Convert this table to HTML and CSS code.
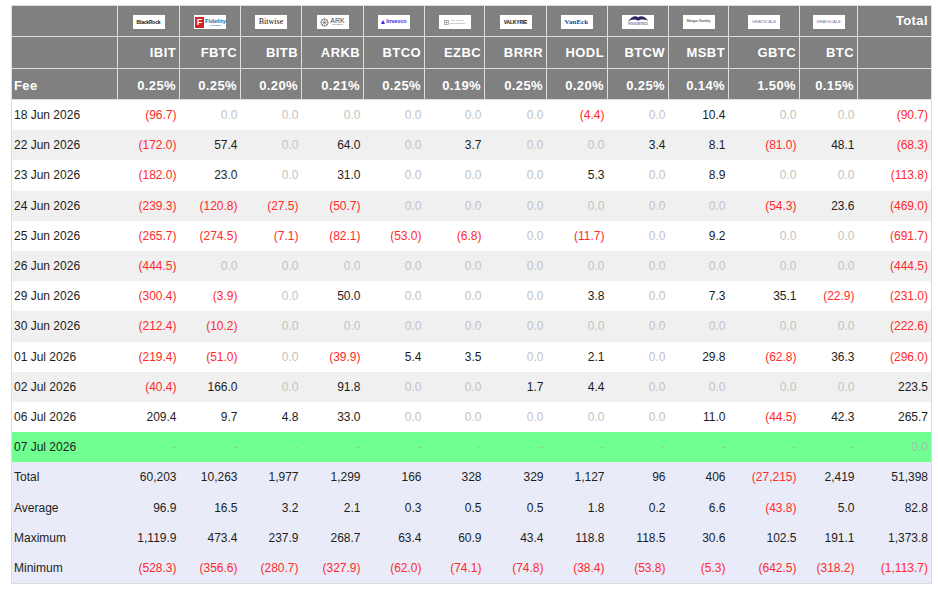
FILE: index.html
```html
<!DOCTYPE html>
<html>
<head>
<meta charset="utf-8">
<link rel="stylesheet" href="styles.css">
</head>
<body>
<table class="flows">
<colgroup>
<col class="c-lbl"><col class="c62"><col class="c61"><col class="c61"><col class="c62"><col class="c61"><col class="c60"><col class="c62"><col class="c61"><col class="c61"><col class="c60"><col class="c71"><col class="c58"><col class="c74">
</colgroup>
<thead>
<tr class="logos">
<th></th>
<th><span class="logo lg-blackrock">BlackRock</span></th>
<th><span class="logo lg-fidelity"><span class="fid-f">F</span><span class="fid-t">Fidelity<span class="fid-s">INVESTMENTS</span></span></span></th>
<th><span class="logo lg-bitwise">Bitwise</span></th>
<th><span class="logo lg-ark"><svg class="ark-ic" viewBox="0 0 10 10"><circle cx="5" cy="5" r="4" fill="none" stroke="#555" stroke-width="0.8"/><path d="M5 1v8M1 5h8M2.2 2.2l5.6 5.6M7.8 2.2l-5.6 5.6" stroke="#555" stroke-width="0.5"/></svg><span class="ark-t">ARK<span class="ark-s">INVEST</span></span></span></th>
<th><span class="logo lg-invesco"><svg class="inv-ic" viewBox="0 0 6 6"><path d="M0 6L3 0L6 6Z" fill="#2f2ee0"/></svg>Invesco</span></th>
<th><span class="logo lg-franklin"><svg class="fr-ic" viewBox="0 0 6 6"><rect x="0.5" y="0.5" width="5" height="5" fill="none" stroke="#888" stroke-width="0.8"/><rect x="2" y="2" width="2" height="2" fill="#888"/></svg><span class="fr-t">FRANKLIN<br>TEMPLETON</span></span></th>
<th><span class="logo lg-valkyrie">VALKYRIE</span></th>
<th><span class="logo lg-vaneck">VanEck<sup>·</sup></span></th>
<th><span class="logo lg-wisdom"><svg class="wt-ic" viewBox="0 0 24 8"><path d="M1 7C5 1 9 0 12 2C15 0 20 1 23 6C19 4 15 4 12 6C9 4 5 4 1 7Z" fill="#2e2466"/></svg><span class="wt-t">WISDOMTREE</span></span></th>
<th><span class="logo lg-morgan">Morgan Stanley</span></th>
<th><span class="logo lg-gray">GRAYSCALE</span></th>
<th><span class="logo lg-gray">GRAYSCALE</span></th>
<th class="big">Total</th>
</tr>
<tr class="tickers">
<th></th>
<th>IBIT</th><th>FBTC</th><th>BITB</th><th>ARKB</th><th>BTCO</th><th>EZBC</th><th>BRRR</th><th>HODL</th><th>BTCW</th><th>MSBT</th><th>GBTC</th><th>BTC</th><th></th>
</tr>
<tr class="fees">
<th class="lbl">Fee</th>
<th>0.25%</th><th>0.25%</th><th>0.20%</th><th>0.21%</th><th>0.25%</th><th>0.19%</th><th>0.25%</th><th>0.20%</th><th>0.25%</th><th>0.14%</th><th>1.50%</th><th>0.15%</th><th></th>
</tr>
</thead>
<tbody>
<tr>
<td class="lbl">18 Jun 2026</td>
<td class="neg">(96.7)</td><td class="z">0.0</td><td class="z">0.0</td><td class="z">0.0</td><td class="z">0.0</td><td class="z">0.0</td><td class="z">0.0</td><td class="neg">(4.4)</td><td class="z">0.0</td><td>10.4</td><td class="z">0.0</td><td class="z">0.0</td><td class="neg">(90.7)</td>
</tr>
<tr>
<td class="lbl">22 Jun 2026</td>
<td class="neg">(172.0)</td><td>57.4</td><td class="z">0.0</td><td>64.0</td><td class="z">0.0</td><td>3.7</td><td class="z">0.0</td><td class="z">0.0</td><td>3.4</td><td>8.1</td><td class="neg">(81.0)</td><td>48.1</td><td class="neg">(68.3)</td>
</tr>
<tr>
<td class="lbl">23 Jun 2026</td>
<td class="neg">(182.0)</td><td>23.0</td><td class="z">0.0</td><td>31.0</td><td class="z">0.0</td><td class="z">0.0</td><td class="z">0.0</td><td>5.3</td><td class="z">0.0</td><td>8.9</td><td class="z">0.0</td><td class="z">0.0</td><td class="neg">(113.8)</td>
</tr>
<tr>
<td class="lbl">24 Jun 2026</td>
<td class="neg">(239.3)</td><td class="neg">(120.8)</td><td class="neg">(27.5)</td><td class="neg">(50.7)</td><td class="z">0.0</td><td class="z">0.0</td><td class="z">0.0</td><td class="z">0.0</td><td class="z">0.0</td><td class="z">0.0</td><td class="neg">(54.3)</td><td>23.6</td><td class="neg">(469.0)</td>
</tr>
<tr>
<td class="lbl">25 Jun 2026</td>
<td class="neg">(265.7)</td><td class="neg">(274.5)</td><td class="neg">(7.1)</td><td class="neg">(82.1)</td><td class="neg">(53.0)</td><td class="neg">(6.8)</td><td class="z">0.0</td><td class="neg">(11.7)</td><td class="z">0.0</td><td>9.2</td><td class="z">0.0</td><td class="z">0.0</td><td class="neg">(691.7)</td>
</tr>
<tr>
<td class="lbl">26 Jun 2026</td>
<td class="neg">(444.5)</td><td class="z">0.0</td><td class="z">0.0</td><td class="z">0.0</td><td class="z">0.0</td><td class="z">0.0</td><td class="z">0.0</td><td class="z">0.0</td><td class="z">0.0</td><td class="z">0.0</td><td class="z">0.0</td><td class="z">0.0</td><td class="neg">(444.5)</td>
</tr>
<tr>
<td class="lbl">29 Jun 2026</td>
<td class="neg">(300.4)</td><td class="neg">(3.9)</td><td class="z">0.0</td><td>50.0</td><td class="z">0.0</td><td class="z">0.0</td><td class="z">0.0</td><td>3.8</td><td class="z">0.0</td><td>7.3</td><td>35.1</td><td class="neg">(22.9)</td><td class="neg">(231.0)</td>
</tr>
<tr>
<td class="lbl">30 Jun 2026</td>
<td class="neg">(212.4)</td><td class="neg">(10.2)</td><td class="z">0.0</td><td class="z">0.0</td><td class="z">0.0</td><td class="z">0.0</td><td class="z">0.0</td><td class="z">0.0</td><td class="z">0.0</td><td class="z">0.0</td><td class="z">0.0</td><td class="z">0.0</td><td class="neg">(222.6)</td>
</tr>
<tr>
<td class="lbl">01 Jul 2026</td>
<td class="neg">(219.4)</td><td class="neg">(51.0)</td><td class="z">0.0</td><td class="neg">(39.9)</td><td>5.4</td><td>3.5</td><td class="z">0.0</td><td>2.1</td><td class="z">0.0</td><td>29.8</td><td class="neg">(62.8)</td><td>36.3</td><td class="neg">(296.0)</td>
</tr>
<tr>
<td class="lbl">02 Jul 2026</td>
<td class="neg">(40.4)</td><td>166.0</td><td class="z">0.0</td><td>91.8</td><td class="z">0.0</td><td class="z">0.0</td><td>1.7</td><td>4.4</td><td class="z">0.0</td><td class="z">0.0</td><td class="z">0.0</td><td class="z">0.0</td><td>223.5</td>
</tr>
<tr>
<td class="lbl">06 Jul 2026</td>
<td>209.4</td><td>9.7</td><td>4.8</td><td>33.0</td><td class="z">0.0</td><td class="z">0.0</td><td class="z">0.0</td><td class="z">0.0</td><td class="z">0.0</td><td>11.0</td><td class="neg">(44.5)</td><td>42.3</td><td>265.7</td>
</tr>
<tr class="today">
<td class="lbl">07 Jul 2026</td>
<td class="z">-</td><td class="z">-</td><td class="z">-</td><td class="z">-</td><td class="z">-</td><td class="z">-</td><td class="z">-</td><td class="z">-</td><td class="z">-</td><td class="z">-</td><td class="z">-</td><td class="z">-</td><td class="z">0.0</td>
</tr>
<tr class="summary">
<td class="lbl">Total</td>
<td>60,203</td><td>10,263</td><td>1,977</td><td>1,299</td><td>166</td><td>328</td><td>329</td><td>1,127</td><td>96</td><td>406</td><td class="neg">(27,215)</td><td>2,419</td><td>51,398</td>
</tr>
<tr class="summary">
<td class="lbl">Average</td>
<td>96.9</td><td>16.5</td><td>3.2</td><td>2.1</td><td>0.3</td><td>0.5</td><td>0.5</td><td>1.8</td><td>0.2</td><td>6.6</td><td class="neg">(43.8)</td><td>5.0</td><td>82.8</td>
</tr>
<tr class="summary">
<td class="lbl">Maximum</td>
<td>1,119.9</td><td>473.4</td><td>237.9</td><td>268.7</td><td>63.4</td><td>60.9</td><td>43.4</td><td>118.8</td><td>118.5</td><td>30.6</td><td>102.5</td><td>191.1</td><td>1,373.8</td>
</tr>
<tr class="summary">
<td class="lbl">Minimum</td>
<td class="neg">(528.3)</td><td class="neg">(356.6)</td><td class="neg">(280.7)</td><td class="neg">(327.9)</td><td class="neg">(62.0)</td><td class="neg">(74.1)</td><td class="neg">(74.8)</td><td class="neg">(38.4)</td><td class="neg">(53.8)</td><td class="neg">(5.3)</td><td class="neg">(642.5)</td><td class="neg">(318.2)</td><td class="neg">(1,113.7)</td>
</tr>
</tbody>
</table>
</body>
</html>
```

FILE: styles.css
```css
html, body {
  background: #ffffff;
}
body {
  margin: 0;
  padding: 5px 0 0 11px;
  font-family: "Liberation Sans", Arial, sans-serif;
  color: #1d1d1d;
}
.flows {
  border-collapse: collapse;
  table-layout: fixed;
  width: 920px;
  border: 1px solid #dcdcdc;
}
.c-lbl { width: 106px; }
.c62 { width: 62px; }
.c61 { width: 61px; }
.c60 { width: 60px; }
.c71 { width: 71px; }
.c58 { width: 58px; }
.c74 { width: 74px; }

.flows th {
  background: #808080;
  color: #ffffff;
  border: 1px solid #dedede;
  font-size: 13px;
  font-weight: bold;
  text-align: right;
  vertical-align: middle;
  padding: 0 3px 0 2px;
  height: 30px;
  line-height: 15px;
  letter-spacing: 0.4px;
  white-space: nowrap;
}
.flows .tickers th { height: 31px; }
.flows .logos th {
  text-align: center;
  padding: 0;
}
.flows .logos th.big {
  text-align: right;
  padding: 0 3px 2px 2px;
  height: 28px;
}
.flows .fees th {
  padding-top: 3px;
  height: 27px;
}
.flows th.lbl { text-align: left; }

.flows td {
  font-size: 12px;
  text-align: right;
  padding: 0 3px 0 2px;
  height: 30.2px;
  white-space: nowrap;
}
.flows td.lbl { text-align: left; }
.flows tbody tr:nth-child(even) td { background: #f0f0f0; }
.flows tbody tr.today td { background: #70ff91; }
.flows tbody tr.summary td { background: #e9ecf8; }
.flows td.neg { color: #ff2a2a; }
.flows td.z { color: #c2c2c2; }
.flows tr.today td.z { color: #9cc6a4; }
.flows tr.today td.lbl { color: #1d1d1d; }

/* logos */
.logo {
  display: inline-flex;
  align-items: center;
  justify-content: center;
  width: 32px;
  height: 14px;
  background: #ffffff;
  vertical-align: middle;
  overflow: hidden;
  letter-spacing: 0;
  font-weight: normal;
  color: #111;
  line-height: 1;
  margin-top: 1px;
}
.lg-blackrock {
  font-size: 5px;
  font-weight: bold;
  letter-spacing: -0.2px;
}
.lg-fidelity {
  justify-content: flex-start;
  padding-left: 1px;
  box-sizing: border-box;
  gap: 1px;
}
.fid-f {
  display: inline-flex;
  align-items: center;
  justify-content: center;
  width: 10px;
  height: 11px;
  background: #d42029;
  color: #fff;
  font-size: 9px;
  font-weight: bold;
}
.fid-t {
  display: flex;
  flex-direction: column;
  font-size: 6px;
  font-weight: bold;
  color: #2d6ea8;
}
.fid-s {
  font-size: 1.6px;
  color: #2d6ea8;
  margin-top: 1px;
}
.lg-bitwise {
  font-family: "Liberation Serif", serif;
  font-size: 8px;
  color: #111;
}
.lg-ark { gap: 1px; }
.ark-ic { width: 9px; height: 9px; }
.ark-t {
  display: flex;
  flex-direction: column;
  font-size: 7px;
  color: #444;
}
.ark-s { font-size: 2.5px; letter-spacing: 0.4px; }
.lg-invesco {
  font-size: 5.5px;
  font-weight: bold;
  color: #2f2ee0;
  gap: 1px;
}
.inv-ic { width: 4px; height: 4px; }
.lg-franklin { gap: 1px; }
.fr-ic { width: 5px; height: 5px; }
.fr-t {
  font-size: 2.2px;
  color: #777;
  line-height: 1.2;
  letter-spacing: 0.2px;
}
.lg-valkyrie {
  font-size: 5px;
  font-weight: bold;
  letter-spacing: -0.2px;
}
.lg-vaneck {
  font-family: "Liberation Serif", serif;
  font-size: 7px;
  font-weight: bold;
  color: #1b3f9b;
}
.lg-vaneck sup { font-size: 4px; }
.lg-wisdom {
  flex-direction: column;
  justify-content: flex-start;
}
.wt-ic { width: 22px; height: 8px; }
.wt-t {
  font-family: "Liberation Serif", serif;
  font-size: 3px;
  color: #2e2466;
}
.lg-morgan {
  font-size: 3.4px;
  color: #222;
}
.lg-gray {
  font-size: 4.2px;
  color: #7b6f9c;
  letter-spacing: -0.1px;
}
```
